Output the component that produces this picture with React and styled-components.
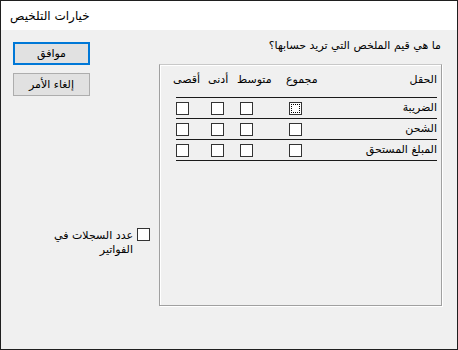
import React from "react";
import styled, { createGlobalStyle } from "styled-components";

const GlobalStyle = createGlobalStyle`
  html, body {
    margin: 0;
    padding: 0;
    background: #f0f0f0;
  }
  * {
    box-sizing: border-box;
  }
`;

const Window = styled.div`
  width: 458px;
  height: 350px;
  border: 1px solid #1f1f1f;
  display: flex;
  flex-direction: column;
  background: #f0f0f0;
  font-family: "DejaVu Sans", "Noto Sans", sans-serif;
  font-size: 11px;
  color: #000;
`;

const TitleBar = styled.div`
  height: 29px;
  background: #fff;
  display: flex;
  align-items: center;
  padding-left: 9px;
  font-size: 12px;
`;

const Body = styled.div`
  flex: 1;
  display: flex;
`;

const LeftCol = styled.div`
  width: 158px;
  padding: 12px 0 0 12px;
  display: flex;
  flex-direction: column;
  align-items: flex-start;
`;

const Button = styled.button`
  width: 77px;
  height: 23px;
  margin-bottom: 8px;
  background: #e1e1e1;
  border: ${(p) => (p.$default ? "2px solid #0078d7" : "1px solid #adadad")};
  font-family: inherit;
  font-size: 11px;
  color: #000;
  padding: 0;
  direction: rtl;
`;

const Option = styled.label`
  margin-top: 124px;
  display: flex;
  align-items: flex-start;
  gap: 4px;
  width: 137px;
  justify-content: flex-end;
`;

const OptionText = styled.span`
  direction: rtl;
  text-align: right;
  line-height: 14px;
  margin-top: 1px;
`;

const Box = styled.span`
  width: 13px;
  height: 13px;
  border: 1px solid #333;
  background: #fff;
  display: inline-block;
  flex-shrink: 0;
  position: relative;
  ${(p) =>
    p.$focus &&
    `
    &::after {
      content: "";
      position: absolute;
      inset: 1px;
      border: 1px dotted #000;
    }
  `}
`;

const RightCol = styled.div`
  flex: 1;
  padding: 9px 15px 0 0;
  display: flex;
  flex-direction: column;
`;

const Question = styled.div`
  direction: rtl;
  text-align: right;
  line-height: 14px;
  padding-right: 1px;
`;

const Frame = styled.div`
  margin-top: 11px;
  height: 242px;
  border: 1px solid #a0a0a0;
  border-top-color: #c8c8c8;
  box-shadow: inset 1px 1px 0 #fff, 1px 1px 0 #fff;
  padding: 8px 4px 0 16px;
`;

const Row = styled.div`
  display: grid;
  grid-template-columns: 35px 29px 49px 60px 1fr;
  height: ${(p) => (p.$head ? "25px" : "21px")};
  border-bottom: 1px solid #1a1a1a;
  align-items: ${(p) => (p.$head ? "start" : "center")};
`;

const HeadCell = styled.span`
  direction: rtl;
  line-height: 14px;
  margin-left: -3px;
  white-space: nowrap;
  text-align: ${(p) => (p.$right ? "right" : "left")};
  ${(p) => p.$right && "margin-left: 0; justify-self: end;"}
`;

const Label = styled.span`
  direction: rtl;
  text-align: right;
  justify-self: end;
  white-space: nowrap;
  line-height: 14px;
`;

const columns = ["أقصى", "أدنى", "متوسط", "مجموع"];
const fields = ["الضريبة", "الشحن", "المبلغ المستحق"];

export default function App() {
  return (
    <>
      <GlobalStyle />
      <Window>
        <TitleBar>خيارات التلخيص</TitleBar>
        <Body>
          <LeftCol>
            <Button $default>موافق</Button>
            <Button>إلغاء الأمر</Button>
            <Option>
              <OptionText>
                عدد السجلات في
                <br />
                الفواتير
              </OptionText>
              <Box />
            </Option>
          </LeftCol>
          <RightCol>
            <Question>ما هي قيم الملخص التي تريد حسابها؟</Question>
            <Frame>
              <Row $head>
                {columns.map((c) => (
                  <HeadCell key={c}>{c}</HeadCell>
                ))}
                <HeadCell $right>الحقل</HeadCell>
              </Row>
              {fields.map((f, i) => (
                <Row key={f}>
                  <Box />
                  <Box />
                  <Box />
                  <Box $focus={i === 0} />
                  <Label>{f}</Label>
                </Row>
              ))}
            </Frame>
          </RightCol>
        </Body>
      </Window>
    </>
  );
}
